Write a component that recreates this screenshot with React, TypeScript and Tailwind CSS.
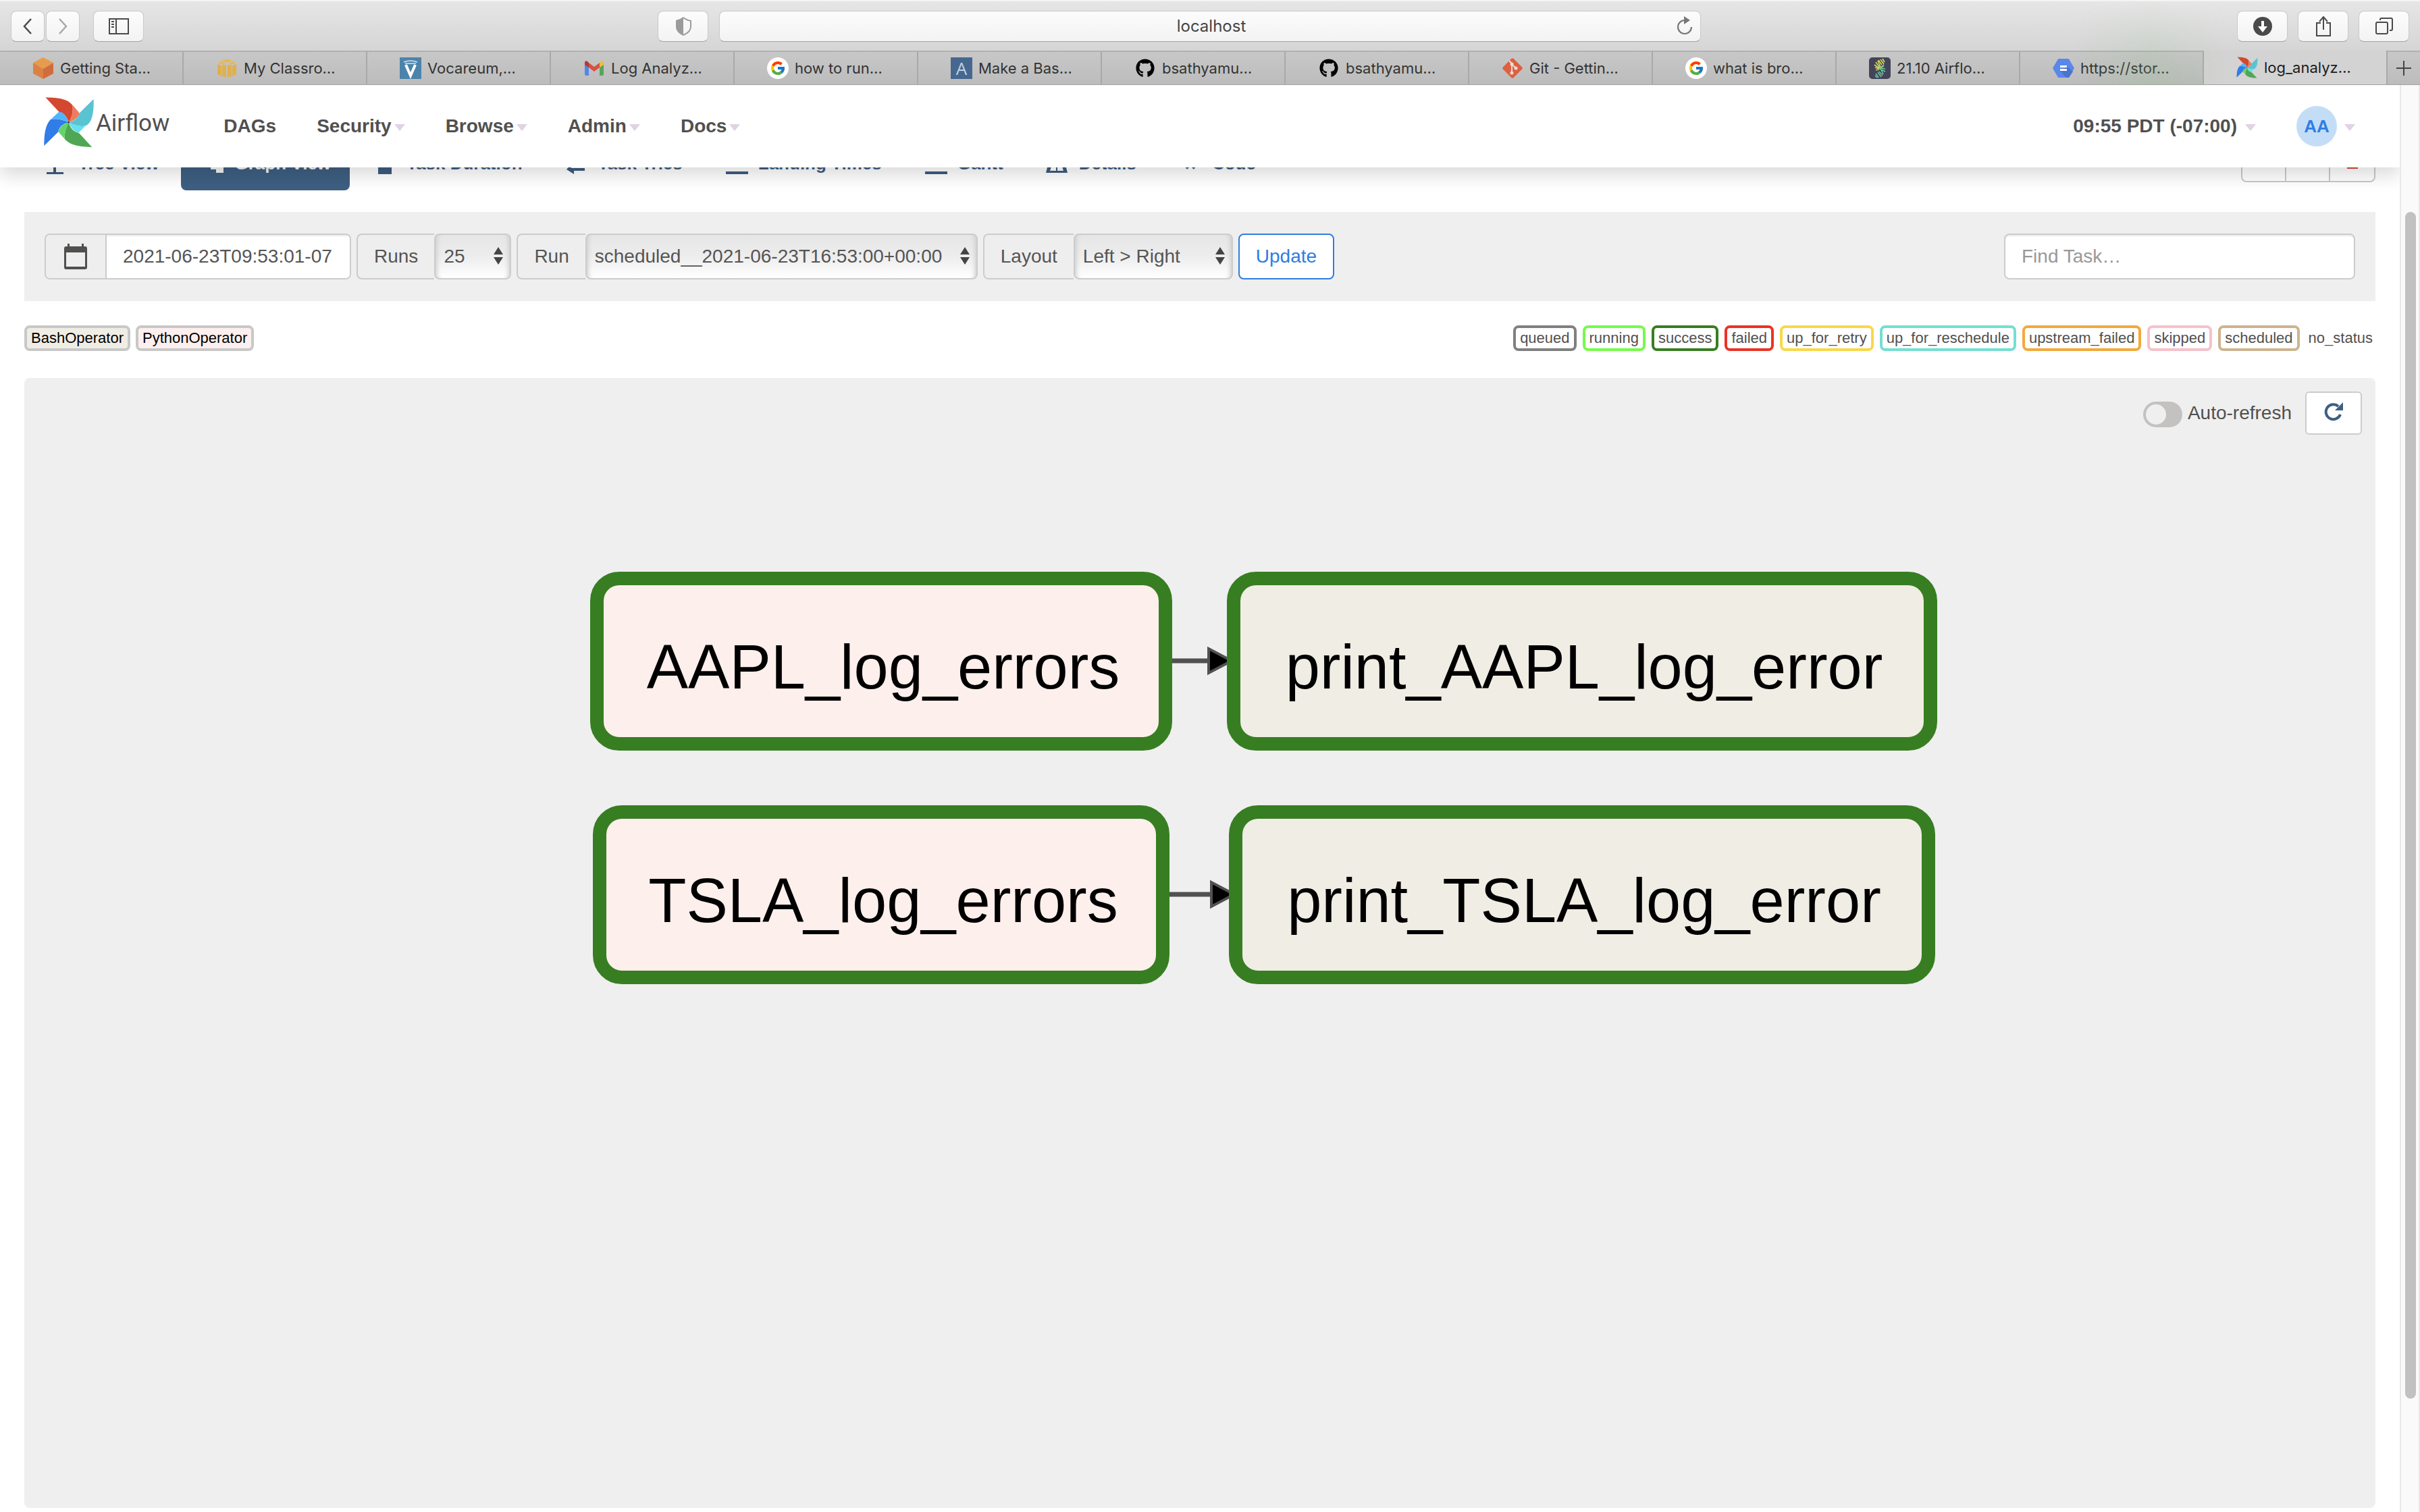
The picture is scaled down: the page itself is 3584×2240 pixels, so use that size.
import React from "react";
import { FaGithub } from "react-icons/fa";
import { FcGoogle } from "react-icons/fc";

function Pinwheel({ className }: { className: string }) {
  return (
    <svg viewBox="74 72 224 224" className={className} aria-hidden="true">
      <path fill="#d3482f" d="M84 76C150 78 180 84 202 110C206 140 198 165 185 185C180 165 165 143 143 139Z" />
      <path fill="#ee7c5f" d="M202 108L232 144C230 162 210 178 185 185C198 165 206 140 202 108Z" />
      <path fill="#5ac3d2" d="M294 83C296 150 285 190 258 200C230 205 205 196 185 185C215 178 228 162 232 144Z" />
      <path fill="#68dfee" d="M258 200L230 229C212 232 194 206 185 185C205 196 230 205 258 200Z" />
      <path fill="#4fa755" d="M287 293C220 292 190 282 168 258C166 230 175 205 185 185C192 210 208 229 230 231Z" />
      <path fill="#62d468" d="M168 258L140 226C142 207 162 191 185 185C175 205 166 230 168 258Z" />
      <path fill="#307ce8" d="M78 287C78 240 82 198 106 172C130 166 160 172 185 185C160 191 142 205 140 226Z" />
      <path fill="#52b4fb" d="M106 172L142 140C162 136 178 160 185 185C160 172 130 166 106 172Z" />
      <circle cx="185" cy="185" r="4" fill="#444" />
    </svg>
  );
}

const googleIcon = (
  <span className="flex size-8 items-center justify-center rounded-full bg-white">
    <FcGoogle className="size-6" />
  </span>
);
const githubIcon = <FaGithub className="size-8 p-0.5 text-black" />;

const browserTabs: { title: string; icon: React.ReactNode }[] = [
  {
    title: "Getting Sta…",
    icon: (
      <svg viewBox="0 0 32 32" className="size-8">
        <path fill="#e69c4c" d="M16 0L31 8L16 17L1 8Z" />
        <path fill="#dc8144" d="M1 8L16 17V32L1 24Z" />
        <path fill="#cf6d3c" d="M31 8L16 17V32L31 24Z" />
      </svg>
    ),
  },
  {
    title: "My Classro…",
    icon: (
      <svg viewBox="0 0 32 32" className="size-8">
        <path fill="#e9b751" d="M16 2L24 5L16 8L8 5ZM6 6L14 9L10 11L3 8ZM26 6L18 9L22 11L29 8Z" />
        <path fill="#dfb050" d="M2 10L8 12V28L2 25ZM9 12L15 11V30L9 28ZM17 11L23 12V28L17 30ZM24 12L30 10V25L24 28Z" />
      </svg>
    ),
  },
  {
    title: "Vocareum,…",
    icon: (
      <svg viewBox="0 0 32 32" className="size-8">
        <rect width="32" height="32" fill="#4c83ab" />
        <path fill="none" stroke="#d5e4ee" strokeWidth="1.5" d="M6 7Q16 3 26 7M8 9H24" />
        <path fill="none" stroke="#fff" strokeWidth="4" d="M9 11L16 27L23 11" />
      </svg>
    ),
  },
  {
    title: "Log Analyz…",
    icon: (
      <svg viewBox="0 0 32 32" className="size-8">
        <path fill="#5386ec" d="M2 10L8 14V27H4Q2 27 2 25Z" />
        <path fill="#59a35b" d="M30 10L24 14V27H28Q30 27 30 25Z" />
        <path fill="#d8503f" d="M8 8L16 14L24 8V15L16 21L8 15Z" />
        <path fill="#b5382c" d="M2 8Q2 4 6 6L8 8V15L2 11Z" />
        <path fill="#ecbd41" d="M30 8Q30 4 26 6L24 8V15L30 11Z" />
      </svg>
    ),
  },
  { title: "how to run…", icon: googleIcon },
  {
    title: "Make a Bas…",
    icon: (
      <span className="flex size-8 items-center justify-center bg-[#46688f] font-['Open_Sans',sans-serif] text-[26px] leading-8 text-[#c3d3e3]">
        A
      </span>
    ),
  },
  { title: "bsathyamu…", icon: githubIcon },
  { title: "bsathyamu…", icon: githubIcon },
  {
    title: "Git - Gettin…",
    icon: (
      <svg viewBox="0 0 32 32" className="size-8">
        <rect x="5" y="5" width="22" height="22" rx="2" fill="#dd6040" transform="rotate(45 16 16)" />
        <path stroke="#e8dcd8" strokeWidth="2" fill="none" d="M11 5L15 9V23M15 10L21 16" />
        <circle cx="15" cy="10" r="2.5" fill="#e8dcd8" />
        <circle cx="21" cy="16" r="2.5" fill="#e8dcd8" />
        <circle cx="15" cy="23" r="2.5" fill="#e8dcd8" />
      </svg>
    ),
  },
  { title: "what is bro…", icon: googleIcon },
  {
    title: "21.10 Airflo…",
    icon: (
      <svg viewBox="0 0 32 32" className="size-8" fill="none">
        <rect width="32" height="32" rx="5" fill="#444459" />
        <path
          stroke="#d6dc55"
          strokeWidth="1.6"
          d="M17 3L22 10M14 4L19 11M20 2L23 7M10 7L16 15M8 11L15 16M9 15L15 17M13 5L17 14"
        />
        <path
          stroke="#69c3a2"
          strokeWidth="1.6"
          d="M10 24L14 30M9 27L12 30M13 22L18 29M17 16L21 25M16 17L24 21M17 16L24 17M18 15L22 13M15 21L20 27"
        />
        <path stroke="#9fd07c" strokeWidth="1.6" d="M15 18L10 19M15 17L22 11" />
      </svg>
    ),
  },
  {
    title: "https://stor…",
    icon: (
      <svg viewBox="0 0 32 32" className="size-8">
        <path fill="#5a87ea" d="M9 2H23Q24 2 25 4L32 16L25 28Q24 30 23 30H9Q8 30 7 28L0 16L7 4Q8 2 9 2Z" />
        <path fill="#4b74cf" d="M21 13L30 21L24 30H20L11 20Z" />
        <path fill="#fff" d="M11 12H21V15H11ZM11 17H21V20H11Z" />
      </svg>
    ),
  },
  { title: "log_analyz…", icon: <Pinwheel className="size-8" /> },
];

function ToolButton({ label, className, children }: { label: string; className: string; children: React.ReactNode }) {
  return (
    <button
      type="button"
      aria-label={label}
      className={
        "flex h-[46px] items-center justify-center rounded-lg border border-[#c9c9c9] border-b-[#a3a3a3] bg-linear-to-b from-[#fcfcfc] to-[#f3f3f3] " +
        className
      }
    >
      {children}
    </button>
  );
}

function BrowserChrome() {
  return (
    <header className="relative font-['Inter',sans-serif]">
      <div className="grid h-[75px] grid-cols-[1fr_1454px_1fr] items-center border-t-2 border-[#f4f4f4] bg-linear-to-b from-[#e6e6e6] to-[#d5d5d5]">
        <div className="flex items-center pr-4 pl-4">
          <ToolButton label="Back" className="w-[50px]">
            <svg viewBox="0 0 16 26" className="h-[26px] w-4" fill="none" stroke="#4a4a4a" strokeWidth="2.5">
              <path d="M13 2L3 13L13 24" />
            </svg>
          </ToolButton>
          <ToolButton label="Forward" className="ml-0.5 w-[50px]">
            <svg viewBox="0 0 16 26" className="h-[26px] w-4" fill="none" stroke="#a8a8a8" strokeWidth="2.5">
              <path d="M3 2L13 13L3 24" />
            </svg>
          </ToolButton>
          <ToolButton label="Show sidebar" className="ml-5 w-[75px]">
            <svg viewBox="0 0 30 24" className="h-6 w-[30px]" fill="none" stroke="#4a4a4a" strokeWidth="2">
              <path d="M1 1H29V23H1ZM11 1V23M4 5H8M4 9H8M4 13H8" />
            </svg>
          </ToolButton>
          <ToolButton label="Privacy report" className="ml-auto w-[75px]">
            <svg viewBox="0 0 24 28" className="h-7 w-6">
              <path fill="#9b9b9b" d="M12 0V28C4 24 1 20 1 14V5Q7 4 12 0Z" />
              <path fill="none" stroke="#9b9b9b" strokeWidth="2" d="M12 1Q17 5 23 6V14C23 20 20 23 12 27" />
            </svg>
          </ToolButton>
        </div>
        <div className="relative">
          <input
            aria-label="Address"
            defaultValue="localhost"
            className="h-[46px] w-full rounded-lg border border-[#c9c9c9] border-b-[#a3a3a3] bg-linear-to-b from-[#fcfcfc] to-[#f3f3f3] pl-1 text-center text-2xl text-[#444]"
          />
          <button type="button" aria-label="Reload" className="absolute top-2 right-3">
            <svg viewBox="0 0 24 28" className="h-7 w-6" fill="none" stroke="#777" strokeWidth="2.2">
              <path d="M12 6A10 10 0 1 0 22 16" />
              <path fill="#777" stroke="none" d="M11 0L20 6L11 12Z" />
            </svg>
          </button>
        </div>
        <div className="flex items-center justify-end gap-[15px] pr-4">
          <ToolButton label="Downloads" className="w-[75px]">
            <svg viewBox="0 0 28 28" className="size-7">
              <circle cx="14" cy="14" r="14" fill="#4a4a4a" />
              <path fill="#fff" d="M12 6H16V14H21L14 23L7 14H12Z" />
            </svg>
          </ToolButton>
          <ToolButton label="Share" className="w-[75px]">
            <svg viewBox="0 0 24 30" className="h-[30px] w-6" fill="none" stroke="#4a4a4a" strokeWidth="2">
              <path d="M8 10H2V29H22V10H16M12 20V2M6 8L12 1L18 8" />
            </svg>
          </ToolButton>
          <ToolButton label="Show all tabs" className="w-[75px]">
            <svg viewBox="0 0 26 26" className="size-[26px]" fill="none" stroke="#4a4a4a" strokeWidth="2">
              <rect x="1" y="7" width="17" height="17" rx="2" />
              <path d="M7 4V3Q7 1 9 1H23Q25 1 25 3V17Q25 19 23 19H21" />
            </svg>
          </ToolButton>
        </div>
      </div>
      <nav aria-label="Browser tabs" className="flex h-[51px] border-b border-[#a3a3a3] bg-linear-to-b from-[#c8c8c8] to-[#bcbcbc]">
        {browserTabs.map((t, i) => {
          const active = i === browserTabs.length - 1;
          return (
            <button
              key={i}
              type="button"
              className={
                "flex min-w-0 flex-1 items-center gap-[9px] border-r-2 border-[#a9a9a9] pl-12 text-[22px] whitespace-nowrap " +
                (active ? "bg-[#d3d3d3] text-[#1c1c1c]" : "border-t-2 border-t-[#b0b0b0] text-[#333]")
              }
            >
              {t.icon}
              <span>{t.title}</span>
            </button>
          );
        })}
        <button type="button" aria-label="New tab" className="flex w-12 items-center justify-center border-t-2 border-[#b0b0b0]">
          <svg viewBox="0 0 22 22" className="size-[22px]" stroke="#444" strokeWidth="2">
            <path d="M11 0V22M0 11H22" />
          </svg>
        </button>
      </nav>
      <div className="pointer-events-none absolute inset-y-0 right-72 w-56 bg-linear-to-r from-transparent via-[#8fbf88]/20 to-transparent mask-t-from-20%" />
    </header>
  );
}

function Caret({ className = "" }: { className?: string }) {
  return (
    <svg viewBox="0 0 16 10" className={"mt-1 h-2.5 w-4 " + className} aria-hidden="true">
      <path fill="#e0d3e3" d="M0 0H16L8 10Z" />
    </svg>
  );
}

function AirflowNav() {
  return (
    <nav className="relative z-10 flex h-[122px] items-center bg-white pl-16 text-[28px] font-bold text-[#51504f] shadow-[0_12px_24px_rgba(0,0,0,0.14)]">
      <a href="#home" className="mr-20 flex items-center gap-0.5">
        <Pinwheel className="mb-3 size-[76px]" />
        <span className="mb-2 font-['Roboto',sans-serif] text-[35px] font-normal">Airflow</span>
      </a>
      <div className="flex items-center gap-[60px]">
        <a href="#dags">DAGs</a>
        {["Security", "Browse", "Admin", "Docs"].map((m) => (
          <a key={m} href={"#" + m} className="flex items-center gap-1">
            {m}
            <Caret />
          </a>
        ))}
      </div>
      <div className="mr-[66px] ml-auto flex items-center gap-[60px]">
        <button type="button" className="flex items-center gap-3">
          09:55 PDT (-07:00)
          <Caret />
        </button>
        <button type="button" className="flex items-center gap-[11px]">
          <span className="flex size-[60px] items-center justify-center rounded-full bg-[#c4ddf7] text-[26px] text-[#2f7de6]">AA</span>
          <Caret />
        </button>
      </div>
    </nav>
  );
}

const views: { label: string; icon: React.ReactNode }[] = [
  { label: "Tree View", icon: <path d="M5 34H30V37H5ZM15 8H19V35H15ZM6 6H28V10H6Z" /> },
  { label: "Graph View", icon: <path d="M4 8H16V20H4ZM16 12H24V30H16ZM24 24H35V35H24ZM24 8H35V18H24Z" /> },
  { label: "Task Duration", icon: <path d="M10 6H30V37H10Z" /> },
  { label: "Task Tries", icon: <path d="M12 28H32V32H16V37L5 30L12 22ZM8 10H26V4L34 12L26 20V14H8Z" /> },
  { label: "Landing Times", icon: <path d="M4 33H37V37H4ZM6 14L34 22V26L6 20Z" /> },
  { label: "Gantt", icon: <path d="M4 33H37V37H4ZM8 12H28V16H8ZM12 20H34V24H12Z" /> },
  { label: "Details", icon: <path fillRule="evenodd" d="M10 8H28L35 35H3ZM11 26L9 32H18V26ZM20 26V32H29L27 26Z" /> },
  { label: "Code", icon: <path d="M6 18L16 8L19 11L12 18L19 26L15 30ZM34 18L24 8L21 11L28 18L21 26L25 30Z" /> },
];

function ViewTabs() {
  return (
    <div className="-mt-[46px] mb-8 flex items-start">
      <ul className="flex gap-1">
        {views.map((v, i) => (
          <li key={v.label}>
            <a
              href={"#view-" + i}
              className={
                "flex h-20 items-center gap-2.5 rounded-lg px-7 text-[26px] font-bold whitespace-nowrap " +
                (i === 1 ? "bg-[#3e5f82] text-[#f3f3f3]" : "text-[#3d5c80]")
              }
            >
              <svg viewBox="0 0 42 42" className="size-[42px]" fill="currentColor" aria-hidden="true">
                {v.icon}
              </svg>
              {v.label}
            </a>
          </li>
        ))}
      </ul>
      <div className="ml-auto flex h-[68px] overflow-hidden rounded-lg border-2 border-[#c9c9c9] bg-white">
        {["Trigger DAG", "Refresh DAG", "Delete DAG"].map((l, i) => (
          <button
            key={l}
            type="button"
            aria-label={l}
            className="flex w-[65px] items-center justify-center border-r-2 border-[#c9c9c9] last:border-r-0"
          >
            {i === 2 && (
              <svg viewBox="0 0 16 28" className="h-7 w-4" fill="#d3482f">
                <path d="M0 6H16V28H0ZM0 2H16V4H0Z" />
              </svg>
            )}
          </button>
        ))}
      </div>
    </div>
  );
}

function PickField({ id, label, value, width }: { id: string; label: string; value: string; width: string }) {
  return (
    <div className="flex h-[68px]">
      <label htmlFor={id} className="flex items-center rounded-l-lg border-2 border-r-0 border-[#ccc] bg-[#eee] px-6">
        {label}
      </label>
      <div className="relative">
        <select
          id={id}
          className={
            "h-[68px] appearance-none rounded-lg border-2 border-[#ccc] bg-linear-to-b from-[#e6e6e6] via-[#ededed] to-white pl-3 shadow-[inset_8px_0_6px_-6px_#ccc,inset_-8px_0_6px_-6px_#ccc] " +
            width
          }
        >
          <option>{value}</option>
        </select>
        <svg viewBox="0 0 14 26" className="pointer-events-none absolute top-5 right-3 h-[26px] w-3.5" fill="#444">
          <path d="M7 0L14 11H0ZM7 26L0 15H14Z" />
        </svg>
      </div>
    </div>
  );
}

function FilterBar() {
  return (
    <form className="flex h-[132px] items-center gap-2 bg-[#efefef] px-[30px] text-[28px] text-[#555]">
      <div className="flex h-[68px] overflow-hidden rounded-lg border-2 border-[#ccc]">
        <label htmlFor="base-date" aria-label="Base date" className="flex w-[90px] items-center justify-center border-r-2 border-[#ccc] bg-[#eee]">
          <svg viewBox="0 0 34 38" className="h-[38px] w-[34px]" fill="#51504f">
            <path fillRule="evenodd" d="M5 0H8V4H26V0H29V4H31Q34 4 34 7V35Q34 38 31 38H3Q0 38 0 35V7Q0 4 3 4H5ZM3 13V34H31V13Z" />
          </svg>
        </label>
        <input
          id="base-date"
          defaultValue="2021-06-23T09:53:01-07"
          className="w-[360px] bg-white pl-6 shadow-[inset_0_2px_2px_rgba(0,0,0,0.08)]"
        />
      </div>
      <PickField id="runs" label="Runs" value="25" width="w-[114px]" />
      <PickField id="run" label="Run" value="scheduled__2021-06-23T16:53:00+00:00" width="w-[581px]" />
      <PickField id="layout" label="Layout" value="Left > Right" width="w-[236px]" />
      <button type="submit" className="h-[68px] rounded-lg border-2 border-[#2f7de1] bg-white px-6 text-[#2f7de1]">
        Update
      </button>
      <input
        type="search"
        aria-label="Find Task"
        placeholder="Find Task…"
        className="ml-auto h-[68px] w-[520px] rounded-lg border-2 border-[#ccc] bg-white px-6 shadow-[inset_0_2px_2px_rgba(0,0,0,0.08)] placeholder:text-[#999]"
      />
    </form>
  );
}

const states = [
  { name: "queued", cls: "border-4 border-[#808080] px-1.5" },
  { name: "running", cls: "border-4 border-[#75fb4c] px-1.5" },
  { name: "success", cls: "border-4 border-[#377e22] px-1.5" },
  { name: "failed", cls: "border-4 border-[#ea3323] px-1.5" },
  { name: "up_for_retry", cls: "border-4 border-[#f9d849] px-1.5" },
  { name: "up_for_reschedule", cls: "border-4 border-[#73dfd0] px-1.5" },
  { name: "upstream_failed", cls: "border-4 border-[#f2a93b] px-1.5" },
  { name: "skipped", cls: "border-4 border-[#f6c1cb] px-1.5" },
  { name: "scheduled", cls: "border-4 border-[#ccb48f] px-1.5" },
  { name: "no_status", cls: "px-1" },
];

function Legend() {
  return (
    <div className="mt-9 mb-10 flex gap-2 text-[22px] leading-none text-[#51504f]">
      <span className="flex h-[38px] items-center rounded-lg border-4 border-[#c8c8c8] bg-[#f0ede4] px-1.5 text-black">BashOperator</span>
      <span className="flex h-[38px] items-center rounded-lg border-4 border-[#c8c8c8] bg-[#fdefed] px-1.5 text-black">PythonOperator</span>
      <div className="ml-auto flex gap-[9px]">
        {states.map((s) => (
          <span key={s.name} className={"flex h-[38px] items-center rounded-lg bg-white " + s.cls}>
            {s.name}
          </span>
        ))}
      </div>
    </div>
  );
}

const nodes = [
  { name: "AAPL_log_errors", cls: "top-[287px] left-[838px] w-[862px] bg-[#fdefec]" },
  { name: "print_AAPL_log_error", cls: "top-[287px] left-[1781px] w-[1052px] bg-[#f0ede4]" },
  { name: "TSLA_log_errors", cls: "top-[633px] left-[842px] w-[854px] bg-[#fdefec]" },
  { name: "print_TSLA_log_error", cls: "top-[633px] left-[1784px] w-[1046px] bg-[#f0ede4]" },
];

function Graph() {
  return (
    <section aria-label="DAG graph" className="relative mb-1.5 flex-1 rounded-lg bg-[#efefef]">
      <div className="flex items-center justify-end gap-5 pt-5 pr-5 text-[28px] text-[#51504f]">
        <label className="flex items-center gap-2">
          <input type="checkbox" role="switch" className="peer sr-only" />
          <span className="mt-1 flex h-[38px] w-[58px] items-center rounded-full bg-[#c3c2c1] pl-1">
            <span className="size-[30px] rounded-full bg-[#efefef]" />
          </span>
          Auto-refresh
        </label>
        <button type="button" aria-label="Refresh" className="flex h-16 w-[84px] items-center justify-center rounded-md border-2 border-[#ccc] bg-white">
          <svg viewBox="0 0 28 28" className="mb-1 size-7" fill="none" stroke="#3e5f82" strokeWidth="4">
            <path d="M24 18A11 11 0 1 1 21 6" />
            <path fill="#3e5f82" stroke="none" d="M28 0V12H16Z" />
          </svg>
        </button>
      </div>
      <svg viewBox="0 0 100 400" className="absolute top-[390px] left-[1690px] h-[400px] w-[100px]" aria-hidden="true">
        <path stroke="#515151" strokeWidth="7" d="M0 29H70M0 375H70" />
        <path fill="#000" stroke="#515151" strokeWidth="4" d="M64 11V47L98 29ZM68 357V393L102 375Z" />
      </svg>
      {nodes.map((n) => (
        <div
          key={n.name}
          className={
            "absolute flex h-[265px] items-center justify-center rounded-[43px] border-[20px] border-[#377e22] pt-4 pl-1.5 text-[92px] leading-none whitespace-nowrap text-black " +
            n.cls
          }
        >
          {n.name}
        </div>
      ))}
    </section>
  );
}

export default function App() {
  return (
    <div className="flex min-h-screen flex-col bg-white font-['Liberation_Sans',Arial,sans-serif]">
      <BrowserChrome />
      <div className="flex flex-1">
        <div className="flex min-w-0 flex-1 flex-col overflow-hidden">
          <AirflowNav />
          <main className="flex flex-1 flex-col px-9">
            <ViewTabs />
            <FilterBar />
            <Legend />
            <Graph />
          </main>
        </div>
        <div className="relative w-[30px] border-x-2 border-[#e8e8e8] bg-[#fafafa]">
          <div className="absolute top-[188px] bottom-[168px] left-1.5 w-4 rounded-full bg-[#c1c1c1]" />
        </div>
      </div>
    </div>
  );
}
